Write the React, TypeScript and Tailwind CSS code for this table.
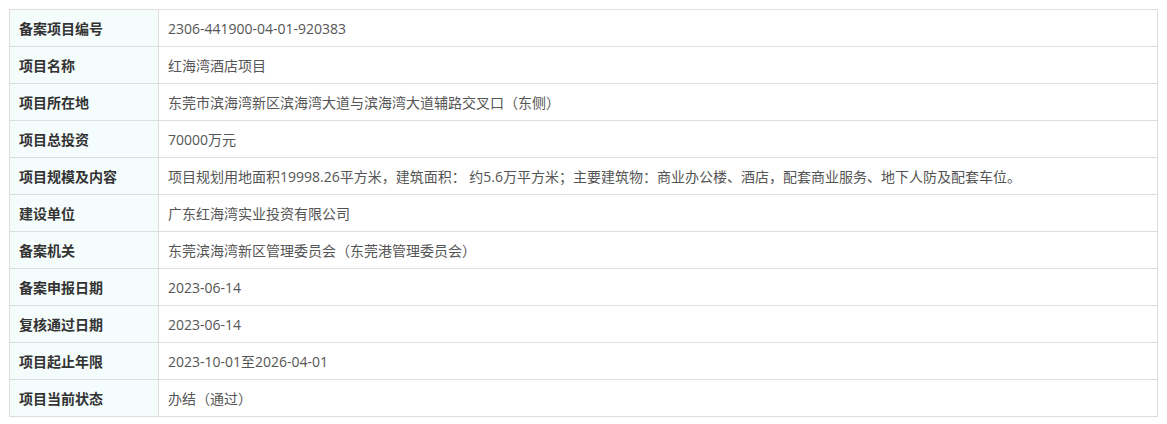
const rows: [string, string][] = [
  ["备案项目编号", "2306-441900-04-01-920383"],
  ["项目名称", "红海湾酒店项目"],
  ["项目所在地", "东莞市滨海湾新区滨海湾大道与滨海湾大道辅路交叉口（东侧）"],
  ["项目总投资", "70000万元"],
  [
    "项目规模及内容",
    "项目规划用地面积19998.26平方米，建筑面积： 约5.6万平方米；主要建筑物：商业办公楼、酒店，配套商业服务、地下人防及配套车位。",
  ],
  ["建设单位", "广东红海湾实业投资有限公司"],
  ["备案机关", "东莞滨海湾新区管理委员会（东莞港管理委员会）"],
  ["备案申报日期", "2023-06-14"],
  ["复核通过日期", "2023-06-14"],
  ["项目起止年限", "2023-10-01至2026-04-01"],
  ["项目当前状态", "办结（通过）"],
];

export default function App() {
  return (
    <div
      className="min-h-[424px] bg-white pt-[9px] pl-[9px] pr-[9px] text-[14px]"
      style={{ fontFamily: '"Open Sans", "Noto Sans CJK SC", sans-serif' }}
    >
      <table className="w-[1149px] border-collapse">
        <tbody>
          {rows.map(([label, value]) => (
            <tr key={label} className="h-[37px]">
              <th className="w-[149px] border border-[#dddddd] bg-[#f5fcfc] pl-[9px] text-left font-bold text-[#333333]">
                {label}
              </th>
              <td className="border border-[#dddddd] pl-[9px] text-left text-[#555555]">
                {value}
              </td>
            </tr>
          ))}
        </tbody>
      </table>
    </div>
  );
}
